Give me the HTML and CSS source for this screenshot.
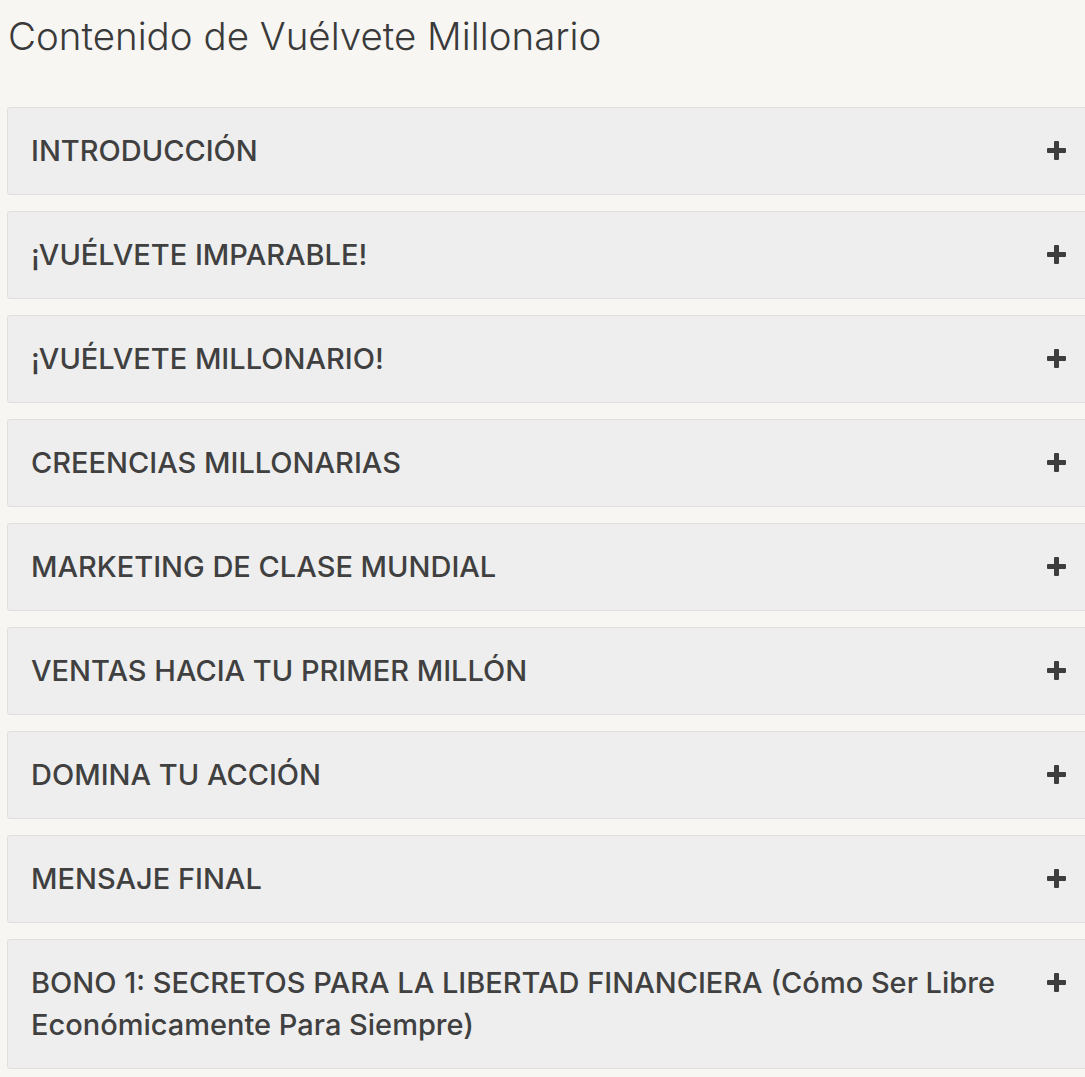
FILE: index.html
```html
<!DOCTYPE html>
<html lang="es">
<head>
<meta charset="utf-8">
<title>Contenido de Vuélvete Millonario</title>
<link rel="stylesheet" href="styles.css">
</head>
<body>
<div class="page">
  <h2 class="title">Contenido de Vuélvete Millonario</h2>
  <div class="accordion">
    <div class="item"><span class="label">INTRODUCCIÓN</span><span class="plus"></span></div>
    <div class="item"><span class="label">¡VUÉLVETE IMPARABLE!</span><span class="plus"></span></div>
    <div class="item"><span class="label">¡VUÉLVETE MILLONARIO!</span><span class="plus"></span></div>
    <div class="item"><span class="label">CREENCIAS MILLONARIAS</span><span class="plus"></span></div>
    <div class="item"><span class="label">MARKETING DE CLASE MUNDIAL</span><span class="plus"></span></div>
    <div class="item"><span class="label">VENTAS HACIA TU PRIMER MILLÓN</span><span class="plus"></span></div>
    <div class="item"><span class="label">DOMINA TU ACCIÓN</span><span class="plus"></span></div>
    <div class="item"><span class="label">MENSAJE FINAL</span><span class="plus"></span></div>
    <div class="item"><span class="label">BONO 1: SECRETOS PARA LA LIBERTAD FINANCIERA (Cómo Ser Libre Económicamente Para Siempre)</span><span class="plus"></span></div>
  </div>
</div>
</body>
</html>
```
FILE: styles.css
```css
html, body {
  margin: 0;
  padding: 0;
  background: #f7f6f3;
  overflow: hidden;
}
.page {
  padding: 0 0 0 7px;
  width: 1093px;
  font-family: "Inter", "Noto Sans", sans-serif;
  color: #3f3f3f;
}
.title {
  margin: 0;
  padding: 13px 0 0 1px;
  font-size: 38.5px;
  font-weight: 300;
  line-height: 46px;
  color: #3a3a3a;
  height: 107px;
  box-sizing: border-box;
}
.accordion {
  display: flex;
  flex-direction: column;
  gap: 16px;
}
.item {
  display: flex;
  align-items: flex-start;
  justify-content: space-between;
  gap: 20px;
  background: #eeeeee;
  border: 1px solid #e0dfdd;
  border-radius: 3px;
  padding: 22px 33px 22px 23px;
}
.label {
  flex: 1;
  max-width: 975px;
  font-size: 29px;
  font-weight: 500;
  line-height: 42px;
  color: #404040;
}
.plus {
  position: relative;
  width: 19px;
  height: 19px;
  margin-top: 11px;
  flex: none;
}
.plus::before, .plus::after {
  content: "";
  position: absolute;
  background: #3e3e3e;
  border-radius: 1px;
}
.plus::before {
  left: 0; right: 0; top: 7px; height: 5px;
}
.plus::after {
  top: 0; bottom: 0; left: 7px; width: 5px;
}
```
